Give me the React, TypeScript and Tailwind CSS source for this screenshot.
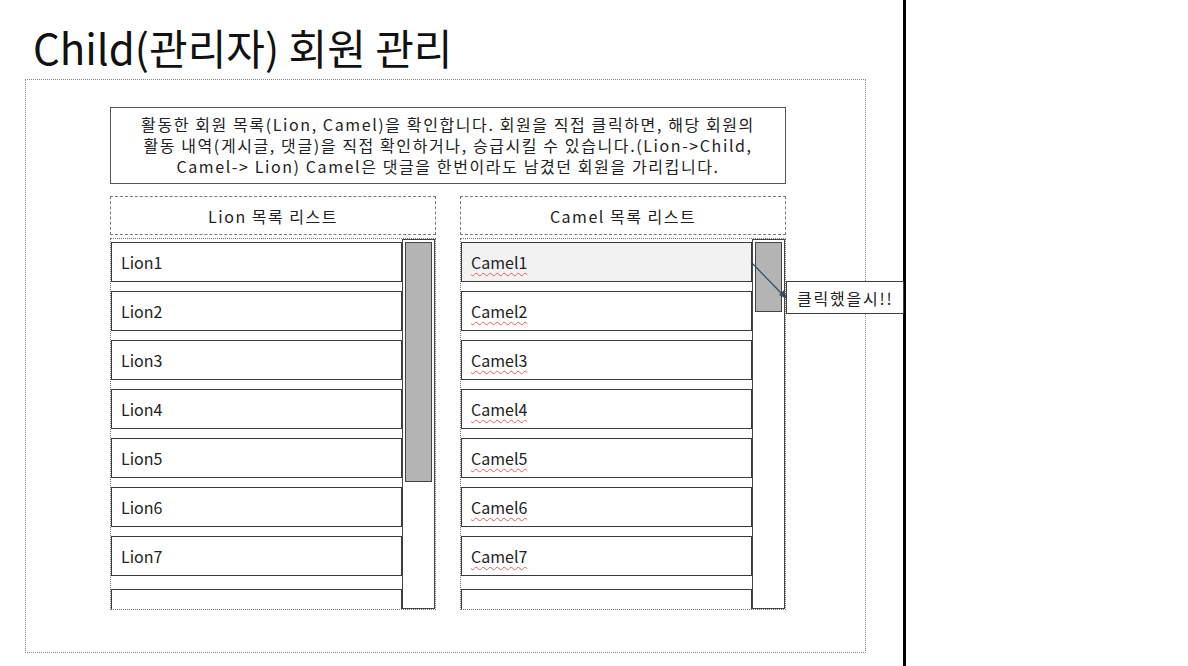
import React from 'react';

const font = { fontFamily: '"Noto Sans CJK KR", "Noto Sans", sans-serif' };

const lions = ['Lion1', 'Lion2', 'Lion3', 'Lion4', 'Lion5', 'Lion6', 'Lion7'];
const camels = ['Camel1', 'Camel2', 'Camel3', 'Camel4', 'Camel5', 'Camel6', 'Camel7'];

interface MemberListProps {
  title: string;
  items: string[];
  wavy?: boolean;
  thumbHeight: number;
  highlightFirst?: boolean;
}

function MemberList({ title, items, wavy, thumbHeight, highlightFirst }: MemberListProps) {
  return (
    <div className="flex w-[326px] flex-col">
      <div className="flex h-[39px] items-center justify-center border border-dashed border-[#7a7a7a] text-[16px] tracking-[1.5px] text-[#222]">
        {title}
      </div>
      <div className="mt-[3px] flex h-[372px] border border-dotted border-[#777]">
        <div className="flex w-[291px] flex-col gap-[9px] overflow-hidden pt-[3px]">
          {items.map((name, i) => (
            <div
              key={name}
              className={`flex h-[40px] shrink-0 items-center border border-[#3a3a3a] pl-[9px] text-[16px] text-[#222] ${
                highlightFirst && i === 0 ? 'bg-[#f2f2f2]' : 'bg-white'
              }`}
            >
              <span className={wavy ? 'underline decoration-wavy decoration-[#e06060] decoration-1 underline-offset-[3px]' : ''}>
                {name}
              </span>
            </div>
          ))}
          <div className="mt-[4px] h-[24px] shrink-0 border border-[#3a3a3a] bg-white" />
        </div>
        <div className="flex w-[33px] flex-col border border-[#444] bg-white p-[2px]">
          <div className="border border-[#444] bg-[#b4b4b4]" style={{ height: thumbHeight }} />
        </div>
      </div>
    </div>
  );
}

export default function App() {
  return (
    <div className="relative flex h-[666px] w-[1188px] overflow-hidden bg-white" style={font}>
      <div className="flex h-full w-[906px] flex-col border-r-[3px] border-black">
        <h1 className="mt-[22px] pl-[33px] text-[42px] font-normal leading-[50px] text-[#111]">
          Child(관리자) 회원 관리
        </h1>
        <div className="ml-[25px] mt-[7px] flex h-[574px] w-[841px] flex-col border border-dotted border-[#888] pl-[84px] pt-[27px]">
          <div className="flex h-[77px] w-[676px] flex-col items-center justify-center border border-[#555] text-[16px] leading-[21px] tracking-[1.6px] text-[#222]">
            <p>활동한 회원 목록(Lion, Camel)을 확인합니다. 회원을 직접 클릭하면, 해당 회원의</p>
            <p>활동 내역(게시글, 댓글)을 직접 확인하거나, 승급시킬 수 있습니다.(Lion-&gt;Child,</p>
            <p>Camel-&gt; Lion) Camel은 댓글을 한번이라도 남겼던 회원을 가리킵니다.</p>
          </div>
          <div className="mt-[12px] flex w-[676px] gap-[24px]">
            <MemberList title="Lion 목록 리스트" items={lions} thumbHeight={240} />
            <MemberList title="Camel 목록 리스트" items={camels} wavy highlightFirst thumbHeight={70} />
          </div>
        </div>
      </div>

      <svg className="absolute left-[748px] top-[258px]" width="42" height="44" viewBox="0 0 42 44">
        <line x1="3" y1="4" x2="35" y2="37" stroke="#3b4a63" strokeWidth="1.3" />
        <polygon points="39,41 31,37 36,32" fill="#3b4a63" />
      </svg>
      <div className="absolute left-[786px] top-[281px] flex h-[33px] w-[118px] items-center border border-[#404040] bg-white pl-[10px] text-[16px] tracking-[1.8px] text-[#222]">
        클릭했을시!!
      </div>
    </div>
  );
}
